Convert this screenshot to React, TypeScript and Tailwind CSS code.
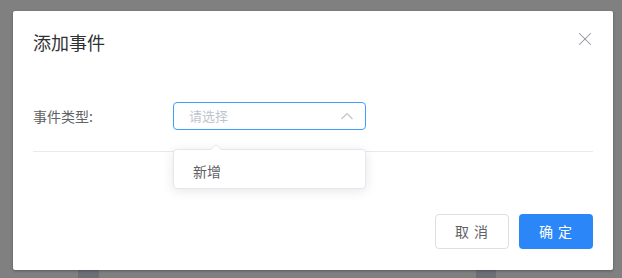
import { X } from "lucide-react"

const font = { fontFamily: '"Noto Sans CJK SC", "Noto Sans", sans-serif' }

function SelectBox() {
  return (
    <div className="relative w-[193px]">
      <div className="flex h-[28px] items-center justify-between rounded-[4px] border border-[#409eff] bg-white pl-[15px] pr-[10px]">
        <span className="text-[13px] text-[#c0c4cc]">请选择</span>
        <svg width="14" height="8" viewBox="0 0 14 8" fill="none" className="mr-[1px]">
          <path d="M1.5 7L7 1.5L12.5 7" stroke="#c0c4cc" strokeWidth="1.2" />
        </svg>
      </div>

      {/* dropdown */}
      <div className="absolute left-0 top-[47px] z-10 w-[193px] rounded-[4px] border border-[#e4e7ed] bg-white pt-[4px] shadow-[0_2px_12px_rgba(0,0,0,0.1)]">
        <div className="absolute -top-[6px] left-[36px] h-0 w-0 border-x-[6px] border-b-[6px] border-x-transparent border-b-[#e4e7ed]" />
        <div className="absolute -top-[5px] left-[37px] h-0 w-0 border-x-[5px] border-b-[5px] border-x-transparent border-b-white" />
        <div className="flex h-[34px] items-center px-[19px] text-[14px] text-[#606266]">新增</div>
      </div>
    </div>
  )
}

export default function App() {
  return (
    <div className="flex h-[278px] w-[622px] flex-col overflow-hidden bg-[#808080] pl-[13px] pt-[11px]" style={font}>
      <div className="relative z-10 flex h-[260px] w-[600px] flex-col rounded-[2px] bg-white shadow-[0_1px_3px_rgba(0,0,0,0.3)]">
        {/* header */}
        <div className="px-[20px] pt-[19px] pb-[10px]">
          <span className="text-[18px] leading-[24px] text-[#303133]">添加事件</span>
        </div>
        <X className="absolute right-[17px] top-[17px] h-[22px] w-[22px] text-[#909399]" strokeWidth={1.1} />

        {/* body */}
        <div className="px-[20px] pt-[37px]">
          <div className="flex items-center">
            <span className="w-[140px] text-[14px] text-[#606266]">事件类型:</span>
            <SelectBox />
          </div>
          <div className="mt-[21px] h-px bg-[#e8eaef]" />
        </div>

        {/* footer */}
        <div className="mt-auto flex justify-end gap-[10px] px-[20px] pb-[21px]">
          <button className="h-[35px] w-[74px] rounded-[4px] border border-[#dcdfe6] bg-white text-[14px] tracking-[1px] text-[#606266]">
            取 消
          </button>
          <button className="h-[35px] w-[74px] rounded-[4px] bg-[#2b87f7] text-[14px] tracking-[1px] text-white">
            确 定
          </button>
        </div>
      </div>

      {/* page behind overlay */}
      <div className="flex">
        <div className="ml-[65px] h-[8px] w-[21px] bg-[#6d6f77]" />
        <div className="ml-[377px] h-[8px] w-[20px] bg-[#6d6f77]" />
      </div>
    </div>
  )
}
